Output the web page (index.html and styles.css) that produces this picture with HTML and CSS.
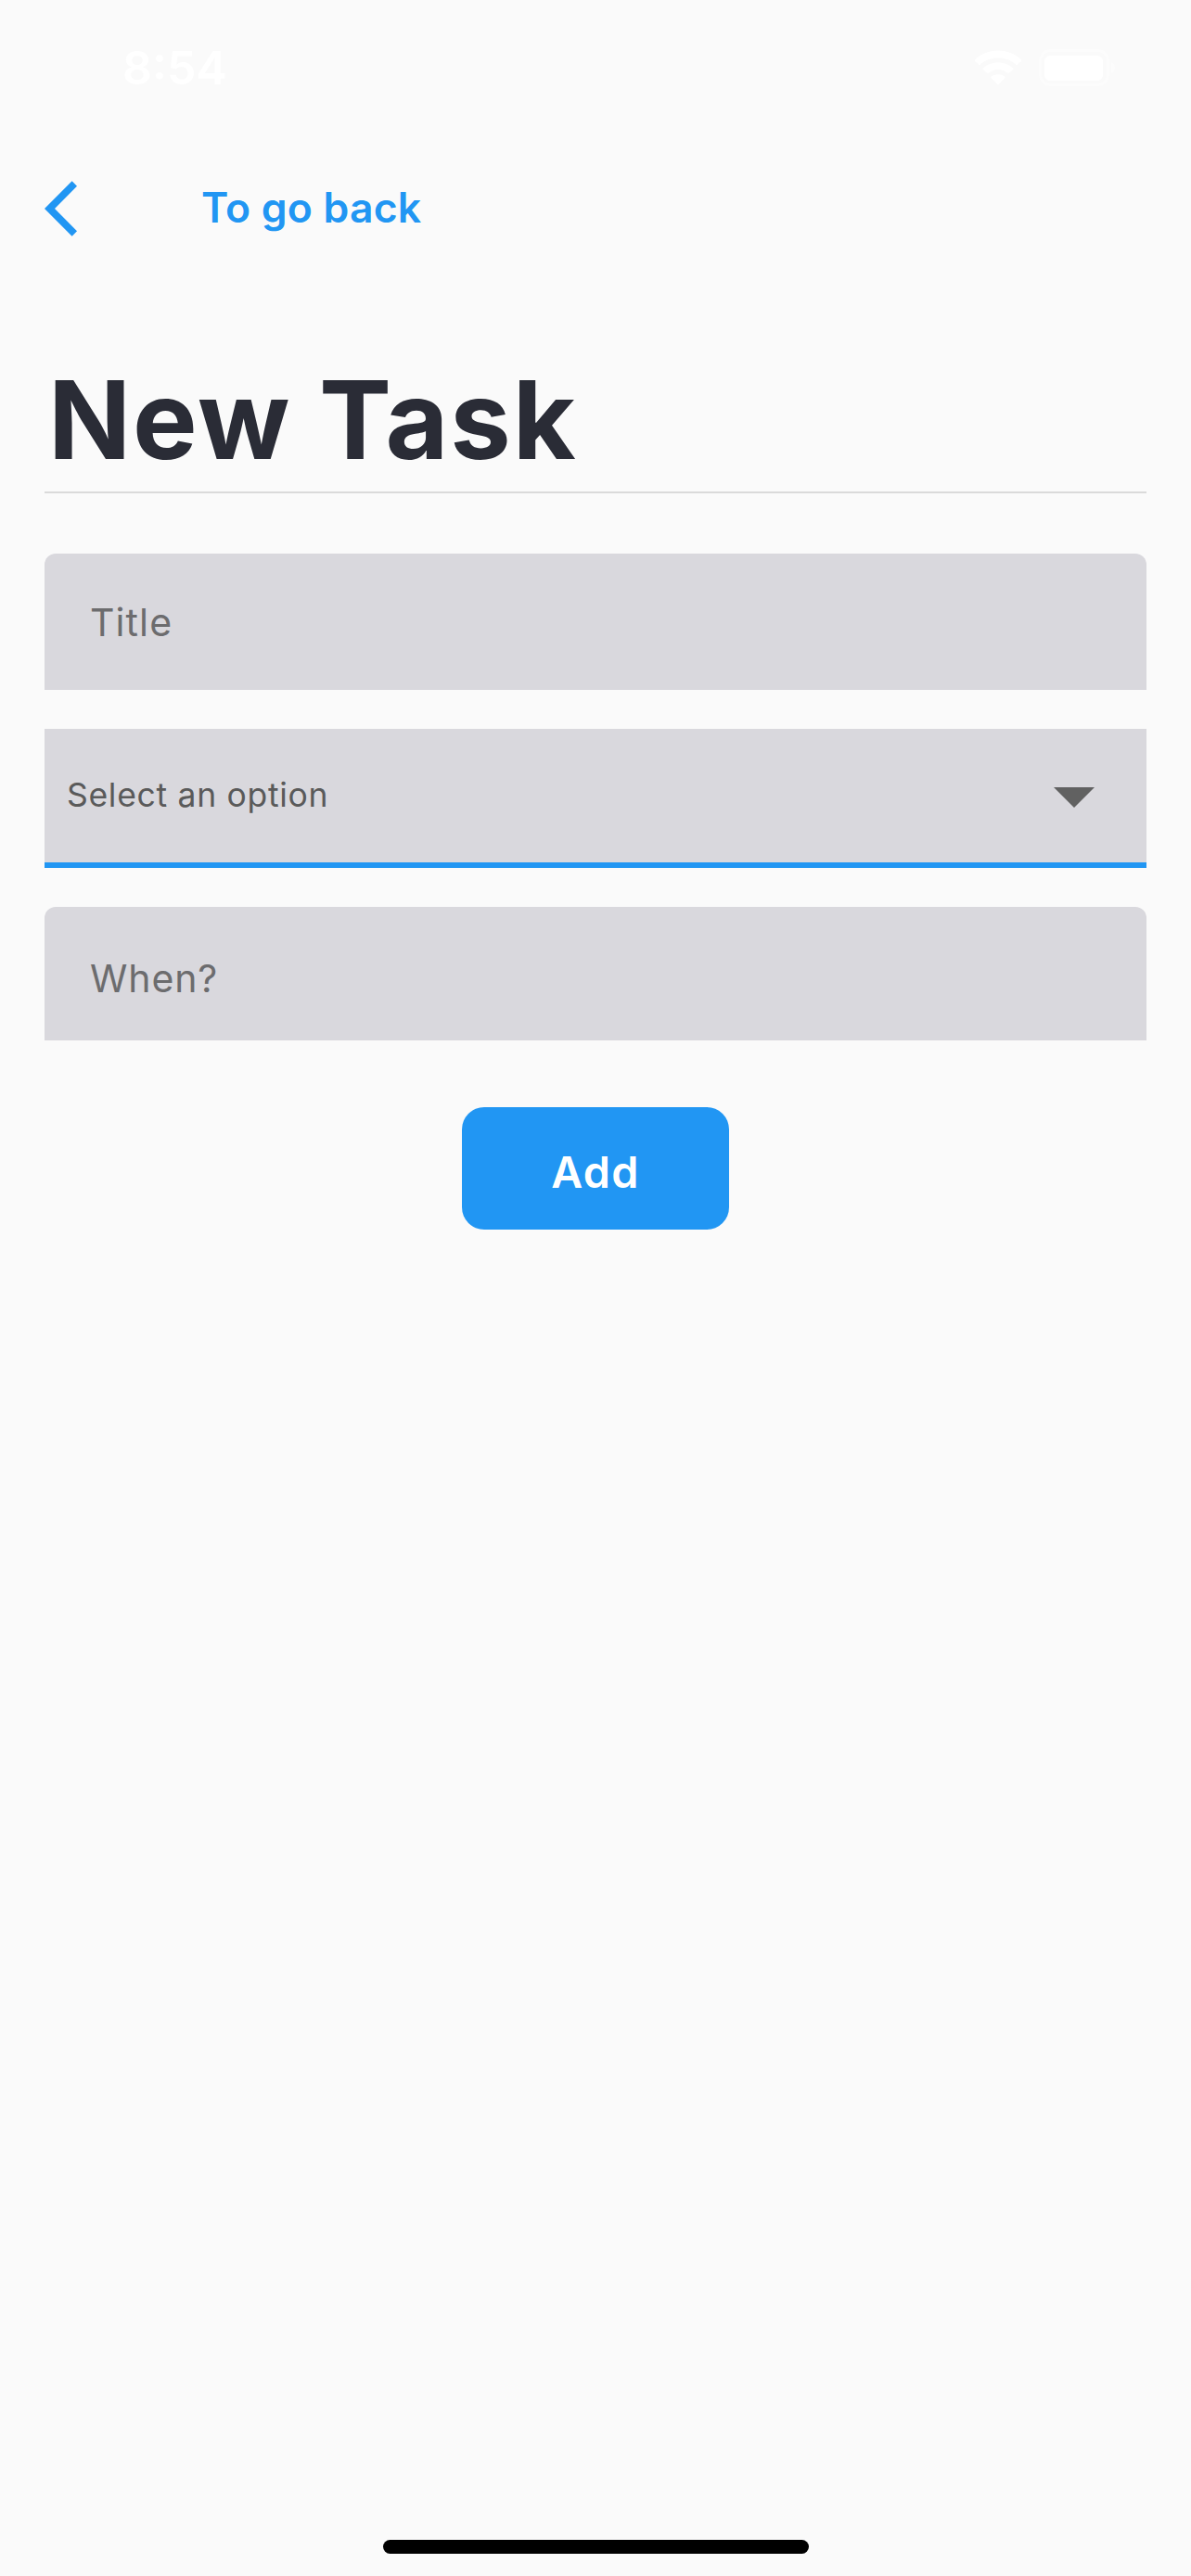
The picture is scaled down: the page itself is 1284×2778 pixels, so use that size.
FILE: index.html
```html
<!DOCTYPE html>
<html lang="en">
<head>
<meta charset="utf-8">
<title>New Task</title>
<link rel="stylesheet" href="styles.css">
</head>
<body>
<div class="screen">
  <header class="status">
    <span class="time">8:54</span>
    <span class="indicators">
      <svg class="wifi" width="52" height="38" viewBox="0 0 52 38" fill="#fff">
        <path d="M26 0.5C36 0.5 44.600 4.200 51 10.500Q51.500 11.200 50.900 11.900L46.700 15.800Q46 16.300 45.300 15.700C40 11 33.500 8.500 26 8.500S12 11 6.700 15.700Q6 16.300 5.300 15.800L1.100 11.900Q0.500 11.200 1 10.500C7.400 4.200 16 0.500 26 0.500Z"/>
        <path d="M26 13.500C32.500 13.500 38 15.800 42.200 19.600Q42.800 20.300 42.200 21L37.800 25Q37.200 25.500 36.500 25C33.500 22.600 30 21 26 21S18.500 22.600 15.500 25Q14.800 25.500 14.200 25L9.800 21Q9.200 20.300 9.800 19.600C14 15.800 19.500 13.500 26 13.500Z"/>
        <path d="M26 26.200C29 26.200 31.500 27.200 33.500 28.800Q34 29.500 33.500 30.100L26.600 37Q26 37.500 25.400 37L18.500 30.100Q18 29.500 18.500 28.800C20.500 27.200 23 26.200 26 26.200Z"/>
      </svg>
      <svg class="battery" width="82" height="40" viewBox="0 0 82 40">
        <rect x="1.500" y="1.500" width="73" height="37" rx="11" fill="none" stroke="#fff" stroke-opacity=".4" stroke-width="3"/>
        <path d="M78 14C80.500 15 82 17.200 82 20S80.500 25 78 26Z" fill="#fff" fill-opacity=".4"/>
        <rect x="6" y="7" width="63" height="27" rx="6" fill="#fff"/>
      </svg>
    </span>
  </header>
  <nav class="nav">
    <svg width="35" height="60" viewBox="0 0 35 60" fill="#2196f3"><path d="M29.600 0.300L35 5.700L11 30L35 54.300L29.600 59.700L0 30Z"/></svg>
    <span class="back">To go back</span>
  </nav>
  <main class="content">
    <h1 class="title">New Task</h1>
    <div class="field">Title</div>
    <div class="select">
      <span>Select an option</span>
      <svg width="44" height="22" viewBox="0 0 44 22" fill="#616161"><path d="M0 0H44L22 22Z"/></svg>
    </div>
    <div class="field when">When?</div>
    <button class="add">Add</button>
  </main>
  <div class="home"></div>
</div>
</body>
</html>
```
FILE: styles.css
```css
* {
  box-sizing: border-box;
}

body {
  margin: 0;
  background: #fafafa;
  font-family: Inter, "Liberation Sans", sans-serif;
}

svg {
  display: block;
}

.screen {
  display: flex;
  flex-direction: column;
  width: 1284px;
  height: 2778px;
  padding-bottom: 24px;
  overflow: hidden;
}

.status {
  display: flex;
  align-items: center;
  justify-content: space-between;
  height: 146px;
  padding: 0 82px 0 132px;
  color: #fff;
}

.time {
  font-size: 50px;
  font-weight: 600;
}

.indicators {
  display: flex;
  align-items: center;
  gap: 18px;
}

.nav {
  display: flex;
  align-items: center;
  gap: 134px;
  height: 158px;
  padding: 0 48px;
}

.back {
  padding-bottom: 2px;
  color: #2196f3;
  font-size: 44.5px;
  font-weight: 600;
  line-height: 60px;
  letter-spacing: 0.19px;
}

.content {
  display: flex;
  flex-direction: column;
  padding: 71px 48px 0;
}

.title {
  margin: 0 0 65px;
  padding-left: 4px;
  border-bottom: 2px solid #dadada;
  color: #2a2c36;
  font-size: 117px;
  font-weight: 700;
  line-height: 155px;
  letter-spacing: 1.9px;
}

.field {
  display: flex;
  align-items: center;
  height: 147px;
  padding: 1px 49px 0;
  border-radius: 12px 12px 0 0;
  background: #d9d8dd;
  color: #6c6c6e;
  font-size: 41px;
  letter-spacing: 1.1px;
}

.select {
  display: flex;
  align-items: center;
  justify-content: space-between;
  height: 150px;
  margin: 42px 0;
  padding: 0 56px 0 24px;
  border-bottom: 6px solid #2196f3;
  background: #d9d8dd;
  color: #5a5a5a;
  font-size: 35.5px;
  letter-spacing: 0.7px;
}

.select span {
  padding-bottom: 2px;
}

.select svg {
  margin-top: 4px;
}

.when {
  height: 144px;
  padding-top: 10px;
  letter-spacing: 0.9px;
}

.add {
  align-self: center;
  width: 288px;
  height: 132px;
  margin-top: 72px;
  padding: 7px 0 0;
  border: 0;
  border-radius: 24px;
  background: #2196f3;
  color: #fff;
  font: 600 46.7px Inter, "Liberation Sans", sans-serif;
  letter-spacing: 1.4px;
}

.home {
  align-self: center;
  width: 459px;
  height: 15px;
  margin-top: auto;
  border-radius: 8px;
  background: #000;
}
```
